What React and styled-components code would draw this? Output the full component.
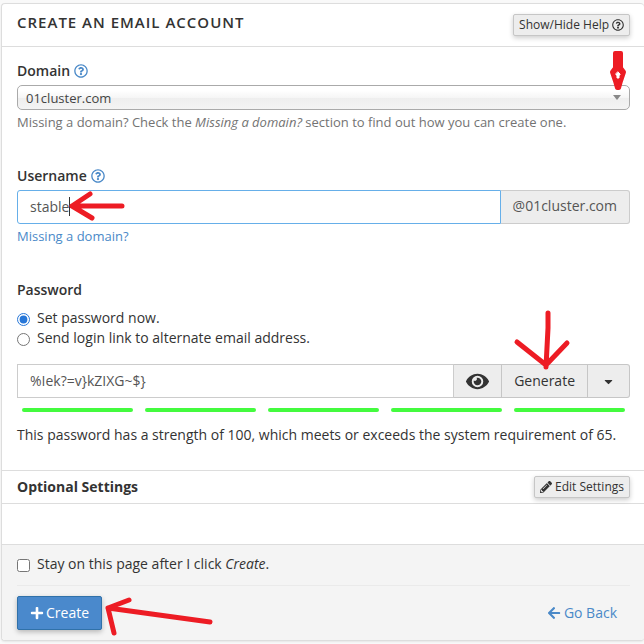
import React, { useState } from "react";
import styled, { createGlobalStyle } from "styled-components";
import {
  FaRegQuestionCircle,
  FaEye,
  FaCaretDown,
  FaPencilAlt,
  FaPlus,
  FaArrowLeft,
} from "react-icons/fa";

const GlobalStyle = createGlobalStyle`
  *, *::before, *::after { box-sizing: border-box; }
  body {
    margin: 0;
    background: #f9f9f9;
    color: #333;
    font-family: "Open Sans", "Noto Sans", sans-serif;
    font-size: 14px;
    line-height: 20px;
  }
  button, input, select { font: inherit; color: inherit; margin: 0; }
  svg { display: block; flex: none; }
`;

const Page = styled.main`
  padding: 3px 0 3px 1px;
`;

const Card = styled.form`
  background: #fff;
  border: 1px solid #ddd;
  border-right-width: 0;
  border-radius: 4px;
  box-shadow: 0 1px 2px rgba(0, 0, 0, 0.08);
  overflow: hidden;
`;

const Bar = styled.div`
  display: flex;
  align-items: center;
  justify-content: space-between;
  height: ${(p) => (p.$tall ? 43 : 33)}px;
  padding: 0 14px 0 15px;
  border-bottom: 1px solid #ddd;
`;

const Title = styled.h1`
  margin: 0;
  padding-bottom: 6px;
  font-size: 15px;
  font-weight: 600;
  letter-spacing: 1px;
  text-transform: uppercase;
`;

const Subtitle = styled.h2`
  margin: 0;
  font-size: 14px;
  font-weight: 700;
`;

const SmallButton = styled.button`
  display: flex;
  align-items: center;
  gap: 3px;
  height: 22px;
  padding: 0 5px;
  font-size: 12px;
  line-height: 18px;
  background: #ededed;
  border: 1px solid #c6c6c6;
  border-radius: 2px;
  box-shadow: 0 2px 5px rgba(0, 0, 0, 0.2);
`;

const Body = styled.div`
  display: flex;
  flex-direction: column;
  gap: 34px;
  padding: 14px 14px 25px 15px;
  border-bottom: 1px solid #ddd;
`;

const Group = styled.section`
  display: flex;
  flex-direction: column;
`;

const LabelRow = styled.div`
  display: flex;
  align-items: center;
  gap: 4px;
  margin-bottom: 4px;
  font-weight: 600;
`;

const HelpLink = styled.a`
  color: #4a89c8;
`;

const Hint = styled.p`
  margin: 2px 0 0;
  font-size: 13px;
  color: #737373;
`;

const TextLink = styled.a`
  display: inline-flex;
  align-items: center;
  gap: 3px;
  color: #4a89c8;
  text-decoration: none;
`;

const Anchor = styled.div`
  position: relative;
  display: flex;
`;

const Select = styled.select`
  appearance: none;
  width: 100%;
  height: 25px;
  padding: 0 8px;
  font-size: 13px;
  color: #444;
  border: 1px solid #aaa;
  border-radius: 5px;
  background: linear-gradient(#fff 20%, #f6f6f6 50%, #eee 52%, #f4f4f4 100%);
`;

const SelectTip = styled.span`
  position: absolute;
  right: 9px;
  top: 10px;
  border: 4px solid transparent;
  border-top: 5px solid #888;
  border-bottom: 0;
  pointer-events: none;
`;

const TextInput = styled.input`
  flex: 1;
  min-width: 0;
  height: 34px;
  padding: 0 12px 2px;
  color: #555;
  background: #fff;
  outline: none;
  border: 1px solid ${(p) => (p.$active ? "#66afe9" : "#ccc")};
  border-radius: ${(p) => (p.$active ? "3px 0 0 3px" : "0")};
`;

const Addon = styled.span`
  display: flex;
  align-items: center;
  height: 34px;
  padding: 0 12px 2px;
  color: #555;
  background: #ededed;
  border: 1px solid #ccc;
  border-left: 0;
  border-radius: 0 3px 3px 0;
`;

const GroupButton = styled.button`
  display: flex;
  align-items: center;
  justify-content: center;
  height: 34px;
  padding: 0 ${(p) => p.$pad}px;
  background: #ededed;
  border: 1px solid #c6c6c6;
  border-left: 0;
  border-radius: ${(p) => (p.$last ? "0 3px 3px 0" : "0")};
`;

const Choice = styled.label`
  display: flex;
  align-items: center;
  gap: 7px;
  input {
    width: 13px;
    height: 13px;
    margin-top: 3px;
    accent-color: #2777d8;
  }
`;

const Choices = styled.div`
  margin: 4px 0 16px;
`;

const Meter = styled.div`
  display: grid;
  grid-template-columns: repeat(5, 1fr);
  gap: 12px;
  padding: 10px 5px 13px;
`;

const MeterBar = styled.span`
  height: 4px;
  border-radius: 2px;
  background: #44fb3f;
`;

const Note = styled.p`
  margin: 0;
`;

const Spacer = styled.div`
  height: 41px;
  border-bottom: 1px solid #ddd;
`;

const Footer = styled.footer`
  padding: 9px 14px 10px 15px;
  background: #f4f4f4;
`;

const Actions = styled.div`
  display: flex;
  align-items: center;
  justify-content: space-between;
  margin-top: 11px;
  padding: 10px 13px 0 0;
  border-top: 1px solid #eaeaea;
`;

const PrimaryButton = styled.button`
  display: flex;
  align-items: center;
  gap: 2px;
  height: 34px;
  padding: 0 12px;
  color: #fff;
  background: #4a89cc;
  border: 1px solid #3071a9;
  border-radius: 2px;
  box-shadow: 0 2px 5px rgba(0, 0, 0, 0.25);
`;

const Mark = styled.svg`
  position: absolute;
  pointer-events: none;
  fill: none;
  stroke: #ed1c24;
  stroke-width: 5;
  stroke-linecap: round;
  stroke-linejoin: round;
`;

const DomainMark = styled(Mark)`
  right: 3px;
  top: -35px;
`;
const UsernameMark = styled(Mark)`
  left: 51px;
  top: 0;
`;
const GenerateMark = styled(Mark)`
  left: 10px;
  top: -54px;
`;
const CreateMark = styled(Mark)`
  left: 86px;
  top: 0;
`;

export default function App() {
  const [user, setUser] = useState("stable");
  const [password, setPassword] = useState("%Iek?=v}kZIXG~$}");
  return (
    <>
      <GlobalStyle />
      <Page>
        <Card onSubmit={(e) => e.preventDefault()}>
          <Bar $tall>
            <Title>Create an Email Account</Title>
            <SmallButton type="button">
              Show/Hide Help <FaRegQuestionCircle size={12} />
            </SmallButton>
          </Bar>
          <Body>
            <Group>
              <LabelRow>
                <label htmlFor="domain">Domain</label>
                <HelpLink href="#domain-help" aria-label="Domain help">
                  <FaRegQuestionCircle size={14} />
                </HelpLink>
              </LabelRow>
              <Anchor>
                <Select id="domain">
                  <option>01cluster.com</option>
                </Select>
                <SelectTip />
                <DomainMark width="18" height="42" viewBox="0 0 18 42">
                  <path
                    d="M6 3H12V18L15 22L12 31L10 38H8L6 31L3 22L6 18Z"
                    fill="#ed1c24"
                    strokeWidth="4"
                  />
                  <path d="M9 22L11 24V25H10V28H8V25H7V24Z" fill="#fff" stroke="#fff" strokeWidth="1" />
                </DomainMark>
              </Anchor>
              <Hint>
                Missing a domain? Check the <em>Missing a domain?</em> section to find out how you
                can create one.
              </Hint>
            </Group>
            <Group>
              <LabelRow>
                <label htmlFor="username">Username</label>
                <HelpLink href="#username-help" aria-label="Username help">
                  <FaRegQuestionCircle size={14} />
                </HelpLink>
              </LabelRow>
              <Anchor>
                <TextInput
                  id="username"
                  $active
                  value={user}
                  onChange={(e) => setUser(e.target.value)}
                />
                <Addon>@01cluster.com</Addon>
                <UsernameMark width="60" height="34" viewBox="0 0 60 34">
                  <rect x="1" y="7" width="1" height="19" fill="#333" stroke="none" />
                  <path d="M22 4L4 16L24 28M4 16H54" />
                </UsernameMark>
              </Anchor>
              <Hint>
                <TextLink href="#missing">Missing a domain?</TextLink>
              </Hint>
            </Group>
            <Group>
              <LabelRow>
                <label htmlFor="password">Password</label>
              </LabelRow>
              <Choices>
                <Choice>
                  <input type="radio" name="mode" defaultChecked />
                  Set password now.
                </Choice>
                <Choice>
                  <input type="radio" name="mode" />
                  Send login link to alternate email address.
                </Choice>
              </Choices>
              <Anchor>
                <TextInput
                  id="password"
                  value={password}
                  onChange={(e) => setPassword(e.target.value)}
                />
                <GroupButton type="button" $pad={12} aria-label="Show password">
                  <FaEye size={23} />
                </GroupButton>
                <Anchor>
                  <GroupButton type="button" $pad={12}>
                    Generate
                  </GroupButton>
                  <GenerateMark width="62" height="64" viewBox="0 0 62 64">
                    <path d="M36 3V18L34 57M5 32L34 55L55 33" />
                  </GenerateMark>
                </Anchor>
                <GroupButton type="button" $pad={14} $last aria-label="More options">
                  <FaCaretDown size={13} />
                </GroupButton>
              </Anchor>
              <Meter>
                {[1, 2, 3, 4, 5].map((n) => (
                  <MeterBar key={n} />
                ))}
              </Meter>
              <Note>
                This password has a strength of 100, which meets or exceeds the system requirement
                of 65.
              </Note>
            </Group>
          </Body>
          <Bar>
            <Subtitle>Optional Settings</Subtitle>
            <SmallButton type="button">
              <FaPencilAlt size={12} /> Edit Settings
            </SmallButton>
          </Bar>
          <Spacer />
          <Footer>
            <Choice>
              <input type="checkbox" />
              <span>
                Stay on this page after I click <em>Create</em>.
              </span>
            </Choice>
            <Actions>
              <Anchor>
                <PrimaryButton type="submit">
                  <FaPlus size={14} /> Create
                </PrimaryButton>
                <CreateMark width="112" height="42" viewBox="0 0 112 42">
                  <path d="M26 4L5 12L107 26M5 12L11 37" />
                </CreateMark>
              </Anchor>
              <TextLink href="#back">
                <FaArrowLeft size={14} /> Go Back
              </TextLink>
            </Actions>
          </Footer>
        </Card>
      </Page>
    </>
  );
}
